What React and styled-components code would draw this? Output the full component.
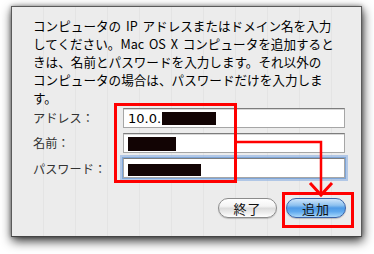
import React from "react";
import styled, { createGlobalStyle } from "styled-components";

const GlobalStyle = createGlobalStyle`
  html, body { margin: 0; padding: 0; background: #ffffff; }
  body { font-family: "Noto Sans CJK JP", "Noto Sans", sans-serif; }
`;

const Page = styled.div`
  position: relative;
  width: 374px;
  height: 254px;
  box-sizing: border-box;
  padding: 6px 0 0 11px;
  overflow: hidden;
  background: #fff;
`;

const Sheet = styled.div`
  width: 351px;
  height: 231px;
  box-sizing: border-box;
  background-color: #ececec;
  background-image: repeating-linear-gradient(
    90deg,
    rgba(0, 0, 0, 0) 0px,
    rgba(0, 0, 0, 0) 31px,
    rgba(0, 0, 0, 0.035) 31px,
    rgba(0, 0, 0, 0.035) 32px
  );
  border: 1px solid #5a5a5a;
  border-bottom-color: #444;
  box-shadow: 1px 4px 10px rgba(0, 0, 0, 0.8), 0 0 4px rgba(0, 0, 0, 0.35);
  display: flex;
  flex-direction: column;
  padding: 10px 15px 0 21px;
`;

const Message = styled.p`
  margin: 0;
  font-size: 12.6px;
  line-height: 18px;
  word-spacing: 2px;
  color: #000;
  white-space: nowrap;
`;

const Form = styled.div`
  display: grid;
  grid-template-columns: 90px 222px;
  grid-auto-rows: 20px;
  row-gap: 5px;
  margin-top: 1px;
  align-items: center;
`;

const Label = styled.div`
  font-size: 12.2px;
  color: #333;
  white-space: nowrap;
  padding-top: ${(p) => p.$shift || 0}px;
`;

const Field = styled.div`
  height: 20px;
  box-sizing: border-box;
  background: #fff;
  border: 1px solid #a6a6a6;
  border-top-color: #7d7d7d;
  display: flex;
  align-items: center;
  padding-left: 4px;
  font-family: "DejaVu Sans", sans-serif;
  font-size: 13px;
  color: #000;
  box-shadow: ${(p) =>
    p.$focused
      ? "0 0 0 1px #7fa6d8, 0 0 0 3px rgba(130, 170, 225, 0.55)"
      : "inset 0 1px 0 #d8d8d8"};
`;

const Redact = styled.span`
  display: inline-block;
  width: ${(p) => p.$w}px;
  height: ${(p) => p.$h}px;
  background: #120404;
  margin-left: ${(p) => p.$ml || 0}px;
  margin-top: ${(p) => p.$mt || 0}px;
`;

const Buttons = styled.div`
  display: flex;
  justify-content: flex-end;
  gap: 9px;
  margin-top: 20px;
`;

const Button = styled.div`
  width: ${(p) => p.$w}px;
  height: 20px;
  box-sizing: border-box;
  border-radius: 10px;
  display: flex;
  align-items: center;
  justify-content: center;
  font-size: 13px;
  color: #111;
  letter-spacing: 1px;
  border: 1px solid ${(p) => (p.$primary ? "#3b63a8" : "#8c8c8c")};
  background: ${(p) =>
    p.$primary
      ? "linear-gradient(180deg, #cfe6fb 0%, #8dc1ef 35%, #4f9be6 50%, #5fa9ee 70%, #a9d8fb 100%)"
      : "linear-gradient(180deg, #ffffff 0%, #f4f4f4 40%, #dcdcdc 52%, #ececec 75%, #ffffff 100%)"};
  box-shadow: 0 1px 1px rgba(0, 0, 0, 0.2);
`;

const Overlay = styled.svg`
  position: absolute;
  left: 0;
  top: 0;
  width: 374px;
  height: 254px;
  pointer-events: none;
`;

export default function App() {
  return (
    <>
      <GlobalStyle />
      <Page>
        <Sheet>
          <Message>
            コンピュータの IP アドレスまたはドメイン名を入力
            <br />
            してください。Mac OS X コンピュータを追加すると
            <br />
            きは、名前とパスワードを入力します。それ以外の
            <br />
            コンピュータの場合は、パスワードだけを入力しま
            <br />
            す。
          </Message>
          <Form>
            <Label>アドレス：</Label>
            <Field>
              10.0.<Redact $w={54} $h={13} $ml={1} $mt={1} />
            </Field>
            <Label>名前：</Label>
            <Field>
              <Redact $w={48} $h={14} $mt={2} />
            </Field>
            <Label $shift={2}>パスワード：</Label>
            <Field $focused>
              <Redact $w={73} $h={12} $mt={3} />
            </Field>
          </Form>
          <Buttons>
            <Button $w={59}>終了</Button>
            <Button $w={60} $primary>追加</Button>
          </Buttons>
        </Sheet>
        <Overlay viewBox="0 0 374 254">
          <g fill="none" stroke="#ff0000">
            <rect x="115.5" y="104.5" width="120" height="77" strokeWidth="3" />
            <rect x="283.5" y="193.5" width="69" height="33" strokeWidth="3" />
            <polyline points="237,142 321,142 321,194" strokeWidth="2.5" />
            <polyline points="310,183 321,195 332,183" strokeWidth="3" />
          </g>
        </Overlay>
      </Page>
    </>
  );
}
